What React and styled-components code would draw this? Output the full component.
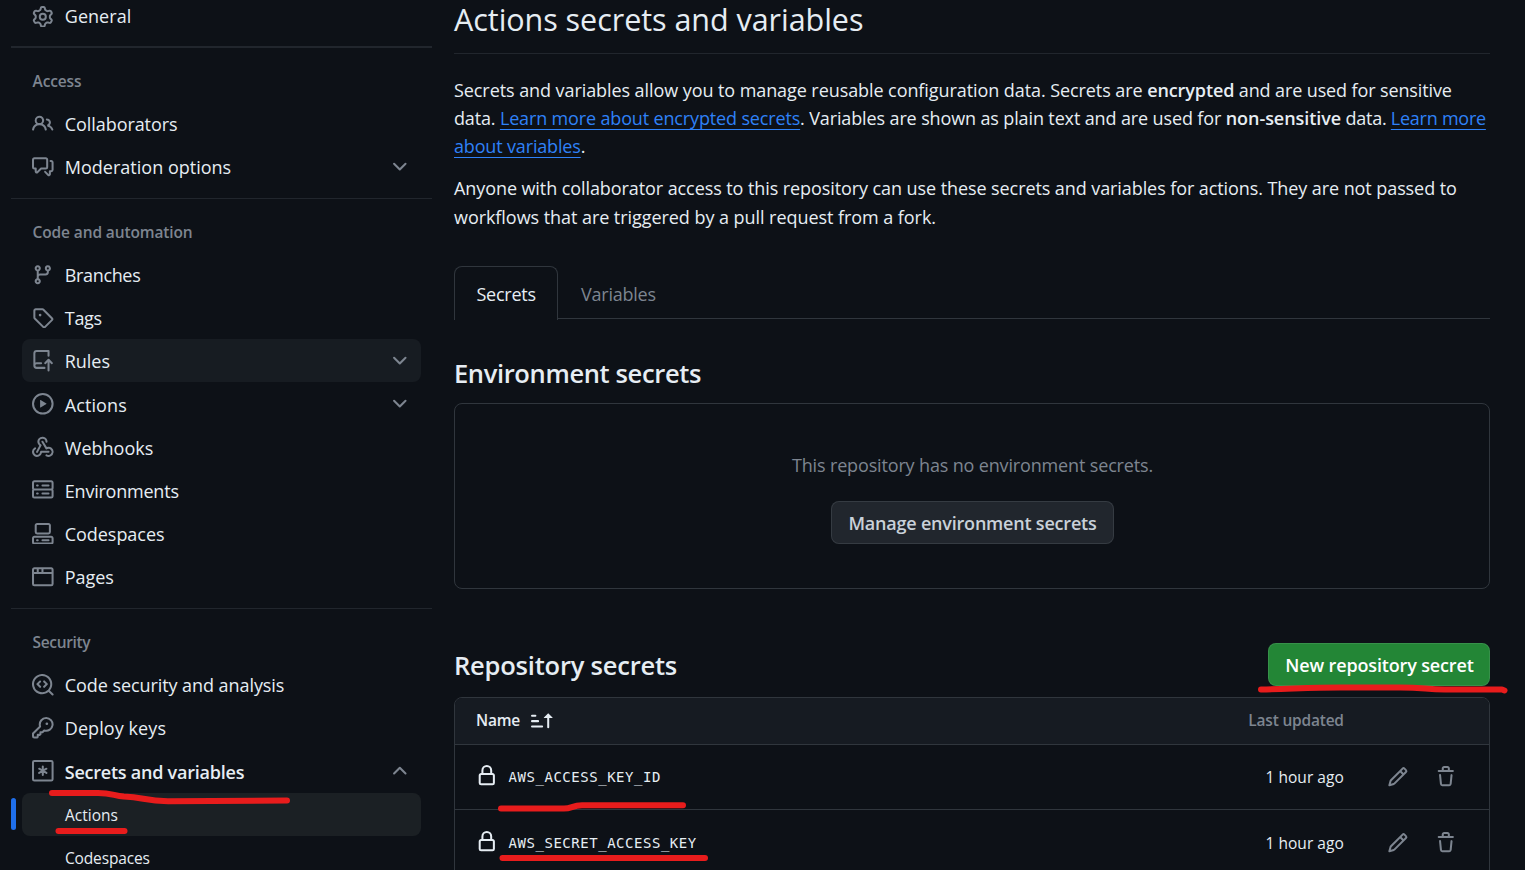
import React from "react";
import styled, { createGlobalStyle } from "styled-components";

const GlobalStyle = createGlobalStyle`
  * { box-sizing: border-box; }
  html, body { margin: 0; height: 100%; background: #0d1117; overflow: hidden; }
  body {
    color: #e6edf3;
    font-family: "Open Sans", "Noto Sans", sans-serif;
    font-size: 18px;
  }
  h1, h2, h3, p { margin: 0; }
`;

const Page = styled.div`
  position: relative;
  display: grid;
  grid-template-columns: 421px 1036px;
  column-gap: 22px;
  padding: 0 35px 0 11px;
  height: 870px;
  overflow: hidden;
`;

const Text = styled.span`
  letter-spacing: ${(p) => p.$ls || 0}px;
  white-space: nowrap;
`;

/* ---------- icons ---------- */

const Glyph = styled.svg`
  flex: none;
  display: block;
  width: 21.6px;
  height: 21.6px;
  fill: currentColor;
`;

const paths = {
  gear: "M8 0a8.2 8.2 0 0 1 .701.031C9.444.095 9.99.645 10.16 1.29l.288 1.107c.018.066.079.158.212.224.231.114.454.243.668.386.123.082.233.09.299.071l1.103-.303c.644-.176 1.392.021 1.82.63.27.385.506.792.704 1.218.315.675.111 1.422-.364 1.891l-.814.806c-.049.048-.098.147-.088.294.016.257.016.515 0 .772-.01.147.038.246.088.294l.814.806c.475.469.679 1.216.364 1.891a7.977 7.977 0 0 1-.704 1.217c-.428.61-1.176.807-1.82.63l-1.102-.302c-.067-.019-.177-.011-.3.071a5.909 5.909 0 0 1-.668.386c-.133.066-.194.158-.211.224l-.29 1.106c-.168.646-.715 1.196-1.458 1.26a8.006 8.006 0 0 1-1.402 0c-.743-.064-1.289-.614-1.458-1.26l-.289-1.106c-.018-.066-.079-.158-.212-.224a5.738 5.738 0 0 1-.668-.386c-.123-.082-.233-.09-.299-.071l-1.103.303c-.644.176-1.392-.021-1.82-.63a8.12 8.12 0 0 1-.704-1.218c-.315-.675-.111-1.422.363-1.891l.815-.806c.05-.048.098-.147.088-.294a6.214 6.214 0 0 1 0-.772c.01-.147-.038-.246-.088-.294l-.815-.806C.635 6.045.431 5.298.746 4.623a7.92 7.92 0 0 1 .704-1.217c.428-.61 1.176-.807 1.82-.63l1.102.302c.067.019.177.011.3-.071.214-.143.437-.272.668-.386.133-.066.194-.158.211-.224l.29-1.106C6.009.645 6.556.095 7.299.03 7.53.01 7.764 0 8 0Zm-.571 1.525c-.036.003-.108.036-.137.146l-.289 1.105c-.147.561-.549.967-.998 1.189-.173.086-.34.183-.5.29-.417.278-.97.423-1.529.27l-1.103-.303c-.109-.03-.175.016-.195.045-.22.312-.412.644-.573.99-.014.031-.021.11.059.19l.815.806c.411.406.562.957.53 1.456a4.709 4.709 0 0 0 0 .582c.032.499-.119 1.05-.53 1.456l-.815.806c-.081.08-.073.159-.059.19.162.346.353.677.573.989.02.03.085.076.195.046l1.102-.303c.56-.153 1.113-.008 1.53.27.161.107.328.204.501.29.447.222.85.629.997 1.189l.289 1.105c.029.109.101.143.137.146a6.6 6.6 0 0 0 1.142 0c.036-.003.108-.036.137-.146l.289-1.105c.147-.561.549-.967.998-1.189.173-.086.34-.183.5-.29.417-.278.97-.423 1.529-.27l1.103.303c.109.029.175-.016.195-.045.22-.313.411-.644.573-.99.014-.031.021-.11-.059-.19l-.815-.806c-.411-.406-.562-.957-.53-1.456a4.709 4.709 0 0 0 0-.582c-.032-.499.119-1.05.53-1.456l.815-.806c.081-.08.073-.159.059-.19a6.464 6.464 0 0 0-.573-.989c-.02-.03-.085-.076-.195-.046l-1.102.303c-.56.153-1.113.008-1.53-.27a4.44 4.44 0 0 0-.501-.29c-.447-.222-.85-.629-.997-1.189l-.289-1.105c-.029-.11-.101-.143-.137-.146a6.6 6.6 0 0 0-1.142 0ZM11 8a3 3 0 1 1-6 0 3 3 0 0 1 6 0ZM9.5 8a1.5 1.5 0 1 0-3.001.001A1.5 1.5 0 0 0 9.5 8Z",
  people: "M2 5.5a3.5 3.5 0 1 1 5.898 2.549 5.508 5.508 0 0 1 3.034 4.084.75.75 0 1 1-1.482.235 4 4 0 0 0-7.9 0 .75.75 0 0 1-1.482-.236A5.507 5.507 0 0 1 3.102 8.05 3.493 3.493 0 0 1 2 5.5ZM11 4a3.001 3.001 0 0 1 2.22 5.018 5.01 5.01 0 0 1 2.56 3.012.749.749 0 0 1-.885.954.752.752 0 0 1-.549-.514 3.507 3.507 0 0 0-2.522-2.372.75.75 0 0 1-.574-.73v-.352a.75.75 0 0 1 .416-.672A1.5 1.5 0 0 0 11 5.5.75.75 0 0 1 11 4Zm-5.5-.5a2 2 0 1 0-.001 3.999A2 2 0 0 0 5.5 3.5Z",
  discussion: "M1.75 1h8.5c.966 0 1.75.784 1.75 1.75v5.5A1.75 1.75 0 0 1 10.25 10H7.061l-2.574 2.573A1.458 1.458 0 0 1 2 11.543V10h-.25A1.75 1.75 0 0 1 0 8.25v-5.5C0 1.784.784 1 1.75 1ZM1.5 2.75v5.5c0 .138.112.25.25.25h1a.75.75 0 0 1 .75.75v2.19l2.72-2.72a.749.749 0 0 1 .53-.22h3.5a.25.25 0 0 0 .25-.25v-5.5a.25.25 0 0 0-.25-.25h-8.5a.25.25 0 0 0-.25.25Zm13 2a.25.25 0 0 0-.25-.25h-.5a.75.75 0 0 1 0-1.5h.5c.966 0 1.75.784 1.75 1.75v5.5A1.75 1.75 0 0 1 14.25 12H14v1.543a1.458 1.458 0 0 1-2.487 1.03L9.22 12.28a.749.749 0 0 1 .326-1.275.749.749 0 0 1 .734.215l2.22 2.22v-2.19a.75.75 0 0 1 .75-.75h1a.25.25 0 0 0 .25-.25Z",
  branch: "M9.5 3.25a2.25 2.25 0 1 1 3 2.122V6A2.5 2.5 0 0 1 10 8.5H6a1 1 0 0 0-1 1v1.128a2.251 2.251 0 1 1-1.5 0V5.372a2.25 2.25 0 1 1 1.5 0v1.836A2.493 2.493 0 0 1 6 7h4a1 1 0 0 0 1-1v-.628A2.25 2.25 0 0 1 9.5 3.25Zm-6 0a.75.75 0 1 0 1.5 0 .75.75 0 0 0-1.5 0Zm8.25-.75a.75.75 0 1 0 0 1.5.75.75 0 0 0 0-1.5ZM4.25 12a.75.75 0 1 0 0 1.5.75.75 0 0 0 0-1.5Z",
  tag: "M1 7.775V2.75C1 1.784 1.784 1 2.75 1h5.025c.464 0 .91.184 1.238.513l6.25 6.25a1.75 1.75 0 0 1 0 2.474l-5.026 5.026a1.75 1.75 0 0 1-2.474 0l-6.25-6.25A1.752 1.752 0 0 1 1 7.775Zm1.5 0c0 .066.026.13.073.177l6.25 6.25a.25.25 0 0 0 .354 0l5.025-5.025a.25.25 0 0 0 0-.354l-6.25-6.25a.25.25 0 0 0-.177-.073H2.75a.25.25 0 0 0-.25.25ZM6 5a1 1 0 1 1 0 2 1 1 0 0 1 0-2Z",
  repoPush: "M1 2.5A2.5 2.5 0 0 1 3.5 0h8.75a.75.75 0 0 1 .75.75v3.5a.75.75 0 0 1-1.5 0V1.5h-8a1 1 0 0 0-1 1v6.708A2.493 2.493 0 0 1 3.5 9h3.25a.75.75 0 0 1 0 1.5H3.5a1 1 0 0 0 0 2h5.75a.75.75 0 0 1 0 1.5H3.5A2.5 2.5 0 0 1 1 11.5Zm13.23 7.79h-.001l-1.224-1.224v6.184a.75.75 0 0 1-1.5 0V9.066L10.28 10.29a.75.75 0 0 1-1.06-1.061l2.505-2.504a.75.75 0 0 1 1.06 0L15.29 9.23a.751.751 0 0 1-.018 1.042.751.751 0 0 1-1.042.018Z",
  play: "M8 0a8 8 0 1 1 0 16A8 8 0 0 1 8 0ZM1.5 8a6.5 6.5 0 1 0 13 0 6.5 6.5 0 0 0-13 0Zm4.879-2.773 4.264 2.559a.25.25 0 0 1 0 .428l-4.264 2.559A.25.25 0 0 1 6 10.559V5.442a.25.25 0 0 1 .379-.215Z",
  webhook: "M5.5 4.25a2.25 2.25 0 0 1 4.5 0 .75.75 0 0 0 1.5 0 3.75 3.75 0 1 0-6.14 2.889l-2.272 4.258a.75.75 0 0 0 1.324.706L7 7.25a.75.75 0 0 0-.309-1.015A2.25 2.25 0 0 1 5.5 4.25Z M7.364 3.607a.75.75 0 0 1 1.03.257l2.608 4.349a3.75 3.75 0 1 1-.628 6.785.75.75 0 0 1 .752-1.299 2.25 2.25 0 1 0-.033-3.88.75.75 0 0 1-1.03-.256L7.107 4.636a.75.75 0 0 1 .257-1.03Z M2.9 8.776A.75.75 0 0 1 2.625 9.8 2.25 2.25 0 1 0 6 11.75a.75.75 0 0 1 .75-.751h5.5a.75.75 0 0 1 0 1.5H7.425a3.751 3.751 0 1 1-5.55-3.998.75.75 0 0 1 1.024.274Z",
  server: "M1.75 1h12.5c.966 0 1.75.784 1.75 1.75v4c0 .372-.116.717-.314 1 .198.283.314.628.314 1v4a1.75 1.75 0 0 1-1.75 1.75H1.75A1.75 1.75 0 0 1 0 12.75v-4c0-.358.109-.707.314-1a1.739 1.739 0 0 1-.314-1v-4C0 1.784.784 1 1.75 1ZM1.5 2.75v4c0 .138.112.25.25.25h12.5a.25.25 0 0 0 .25-.25v-4a.25.25 0 0 0-.25-.25H1.75a.25.25 0 0 0-.25.25Zm.25 5.75a.25.25 0 0 0-.25.25v4c0 .138.112.25.25.25h12.5a.25.25 0 0 0 .25-.25v-4a.25.25 0 0 0-.25-.25ZM7 4.75A.75.75 0 0 1 7.75 4h4.5a.75.75 0 0 1 0 1.5h-4.5A.75.75 0 0 1 7 4.75ZM7.75 10h4.5a.75.75 0 0 1 0 1.5h-4.5a.75.75 0 0 1 0-1.5ZM3 4.75A.75.75 0 0 1 3.75 4h.5a.75.75 0 0 1 0 1.5h-.5A.75.75 0 0 1 3 4.75ZM3.75 10h.5a.75.75 0 0 1 0 1.5h-.5a.75.75 0 0 1 0-1.5Z",
  codespaces: "M0 11.25c0-.966.784-1.75 1.75-1.75h12.5c.966 0 1.75.784 1.75 1.75v3A1.75 1.75 0 0 1 14.25 16H1.75A1.75 1.75 0 0 1 0 14.25Zm2-9.5C2 .784 2.784 0 3.75 0h8.5C13.216 0 14 .784 14 1.75v5a1.75 1.75 0 0 1-1.75 1.75h-8.5A1.75 1.75 0 0 1 2 6.75Zm1.75-.25a.25.25 0 0 0-.25.25v5c0 .138.112.25.25.25h8.5a.25.25 0 0 0 .25-.25v-5a.25.25 0 0 0-.25-.25Zm-2 9.5a.25.25 0 0 0-.25.25v3c0 .138.112.25.25.25h12.5a.25.25 0 0 0 .25-.25v-3a.25.25 0 0 0-.25-.25Z M7 12.75a.75.75 0 0 1 .75-.75h4.5a.75.75 0 0 1 0 1.5h-4.5a.75.75 0 0 1-.75-.75Zm-4 0a.75.75 0 0 1 .75-.75h.5a.75.75 0 0 1 0 1.5h-.5a.75.75 0 0 1-.75-.75Z",
  browser: "M0 2.75C0 1.784.784 1 1.75 1h12.5c.966 0 1.75.784 1.75 1.75v10.5A1.75 1.75 0 0 1 14.25 15H1.75A1.75 1.75 0 0 1 0 13.25ZM14.5 6h-13v7.25c0 .138.112.25.25.25h12.5a.25.25 0 0 0 .25-.25Zm-6-3.5v2h6V2.75a.25.25 0 0 0-.25-.25ZM5 2.5v2h2v-2Zm-3.25 0a.25.25 0 0 0-.25.25V4.5h2v-2Z",
  codescan: "M8.47 4.97a.75.75 0 0 0 0 1.06L9.94 7.5 8.47 8.97a.75.75 0 1 0 1.06 1.06l2-2a.75.75 0 0 0 0-1.06l-2-2a.75.75 0 0 0-1.06 0ZM6.53 6.03a.75.75 0 0 0-1.06-1.06l-2 2a.75.75 0 0 0 0 1.06l2 2a.75.75 0 1 0 1.06-1.06L5.06 7.5l1.47-1.47Z M12.246 13.307a7.501 7.501 0 1 1 1.06-1.06l2.474 2.473a.749.749 0 0 1-.326 1.275.749.749 0 0 1-.734-.215ZM1.5 7.5a6.002 6.002 0 0 0 3.608 5.504 6.002 6.002 0 0 0 6.486-1.117.748.748 0 0 1 .292-.293A6 6 0 1 0 1.5 7.5Z",
  key: "M10.5 0a5.499 5.499 0 1 1-1.288 10.848l-.932.932a.749.749 0 0 1-.53.22H7v.75a.749.749 0 0 1-.22.53l-.5.5a.749.749 0 0 1-.53.22H5v.75a.749.749 0 0 1-.22.53l-.5.5a.749.749 0 0 1-.53.22h-2A1.75 1.75 0 0 1 0 14.25v-2c0-.199.079-.389.22-.53l4.932-4.932A5.5 5.5 0 0 1 10.5 0Zm-4 5.5c-.001.431.069.86.205 1.269a.75.75 0 0 1-.181.768L1.5 12.56v1.69c0 .138.112.25.25.25h1.69l.06-.06v-1.19a.75.75 0 0 1 .75-.75h1.19l.06-.06v-1.19a.75.75 0 0 1 .75-.75h1.19l1.023-1.025a.75.75 0 0 1 .768-.18A4 4 0 1 0 6.5 5.5ZM11 6a1 1 0 1 1 0-2 1 1 0 0 1 0 2Z",
  chevronDown: "M12.78 5.22a.749.749 0 0 1 0 1.06l-4.25 4.25a.749.749 0 0 1-1.06 0L3.22 6.28a.749.749 0 1 1 1.06-1.06L8 8.939l3.72-3.719a.749.749 0 0 1 1.06 0Z",
  chevronUp: "M3.22 10.53a.749.749 0 0 1 0-1.06l4.25-4.25a.749.749 0 0 1 1.06 0l4.25 4.25a.749.749 0 1 1-1.06 1.06L8 6.811 4.28 10.53a.749.749 0 0 1-1.06 0Z",
  lock: "M4 4a4 4 0 0 1 8 0v2h.25c.966 0 1.75.784 1.75 1.75v5.5A1.75 1.75 0 0 1 12.25 15h-8.5A1.75 1.75 0 0 1 2 13.25v-5.5C2 6.784 2.784 6 3.75 6H4Zm8.25 3.5h-8.5a.25.25 0 0 0-.25.25v5.5c0 .138.112.25.25.25h8.5a.25.25 0 0 0 .25-.25v-5.5a.25.25 0 0 0-.25-.25ZM10.5 6V4a2.5 2.5 0 1 0-5 0v2Z",
  pencil: "M11.013 1.427a1.75 1.75 0 0 1 2.474 0l1.086 1.086a1.75 1.75 0 0 1 0 2.474l-8.61 8.61c-.21.21-.47.364-.756.445l-3.251.93a.75.75 0 0 1-.927-.928l.929-3.25c.081-.286.235-.547.445-.758l8.61-8.61Zm.176 4.823L9.75 4.81l-6.286 6.287a.253.253 0 0 0-.064.108l-.558 1.953 1.953-.558a.253.253 0 0 0 .108-.064Zm1.238-3.763a.25.25 0 0 0-.354 0L10.811 3.75l1.439 1.44 1.263-1.263a.25.25 0 0 0 0-.354Z",
  trash: "M11 1.75V3h2.25a.75.75 0 0 1 0 1.5H2.75a.75.75 0 0 1 0-1.5H5V1.75C5 .784 5.784 0 6.75 0h2.5C10.216 0 11 .784 11 1.75ZM4.496 6.675l.66 6.6a.25.25 0 0 0 .249.225h5.19a.25.25 0 0 0 .249-.225l.66-6.6a.75.75 0 0 1 1.492.149l-.66 6.6A1.748 1.748 0 0 1 10.595 15h-5.19a1.75 1.75 0 0 1-1.741-1.575l-.66-6.6a.75.75 0 1 1 1.492-.15ZM6.5 1.75V3h3V1.75a.25.25 0 0 0-.25-.25h-2.5a.25.25 0 0 0-.25.25Z",
  sortAsc: "m12.927 2.573 3 3A.25.25 0 0 1 15.75 6H13.5v6.75a.75.75 0 0 1-1.5 0V6H9.75a.25.25 0 0 1-.177-.427l3-3a.25.25 0 0 1 .354 0ZM0 12.25a.75.75 0 0 1 .75-.75h7.5a.75.75 0 0 1 0 1.5H.75a.75.75 0 0 1-.75-.75Zm0-4a.75.75 0 0 1 .75-.75h4.5a.75.75 0 0 1 0 1.5H.75A.75.75 0 0 1 0 8.25Zm0-4a.75.75 0 0 1 .75-.75h2.5a.75.75 0 0 1 0 1.5H.75A.75.75 0 0 1 0 4.25Z",
};

function Icon({ name }) {
  if (name === "asterisk") {
    return (
      <Glyph viewBox="0 0 16 16" aria-hidden="true">
        <g fill="none" stroke="currentColor" strokeWidth="1.5">
          <rect x=".75" y=".75" width="14.5" height="14.5" rx="1" />
          <path strokeLinecap="round" strokeWidth="1.5" d="M8 4.900v6.200M5.300 6.450l5.400 3.100M10.700 6.450l-5.400 3.100" />
        </g>
      </Glyph>
    );
  }
  return (
    <Glyph viewBox="0 0 16 16" aria-hidden="true">
      <path d={paths[name]} />
    </Glyph>
  );
}

/* ---------- sidebar ---------- */

const Sidebar = styled.nav`
  display: flex;
  flex-direction: column;
`;

const NavGroup = styled.section`
  --label-top: ${(p) => p.$labelTop || 0}px;
  display: flex;
  flex-direction: column;
  flex: none;
`;

const NavRow = styled.a`
  position: relative;
  flex: none;
  display: flex;
  align-items: center;
  gap: 11.2px;
  height: ${(p) => (p.$first ? 33 : 43.2)}px;
  margin: 0 11px;
  padding: ${(p) => (p.$sub ? "0 10px 0 43px" : "0 10px")};
  border-radius: 8px;
  background: ${(p) => p.$bg || "transparent"};
  font-size: ${(p) => (p.$sub ? 15.5 : 18)}px;
  font-weight: ${(p) => (p.$bold ? 600 : 400)};

  ${(p) =>
    p.$current &&
    `&::before {
      content: "";
      position: absolute;
      left: -11px;
      top: 5px;
      width: 5px;
      height: 32px;
      border-radius: 3px;
      background: #1f6feb;
    }`}
`;

const NavLabel = styled(Text)`
  padding-top: var(--label-top);
  padding-bottom: ${(p) => (p.$raised ? 2 : 0)}px;
`;

const NavIcon = styled.span`
  color: #7d8590;
`;

const Chevron = styled(NavIcon)`
  margin-left: auto;
`;

const Divider = styled.div`
  flex: none;
  height: ${(p) => p.$h || 1}px;
  margin-top: ${(p) => p.$gap}px;
  background: #21262d;
`;

const GroupTitle = styled.h3`
  flex: none;
  height: ${(p) => p.$h}px;
  padding: ${(p) => p.$top || 21.5}px 21.5px 0;
  line-height: 24px;
  font-size: 15.5px;
  font-weight: 600;
  color: #7d8590;
`;

function NavItem({ icon, label, ls, chevron, raised, ...rest }) {
  return (
    <NavRow {...rest}>
      {icon && (
        <NavIcon>
          <Icon name={icon} />
        </NavIcon>
      )}
      <NavLabel $ls={ls} $raised={raised}>{label}</NavLabel>
      {chevron && (
        <Chevron>
          <Icon name={chevron} />
        </Chevron>
      )}
    </NavRow>
  );
}

/* ---------- main column ---------- */

const Main = styled.main`
  display: flex;
  flex-direction: column;
`;

const PageTitle = styled.h1`
  height: 54px;
  border-bottom: 1px solid #21262d;
  line-height: 38px;
  font-size: 30.5px;
  font-weight: 400;
`;

const Intro = styled.div`
  display: flex;
  flex-direction: column;
  gap: 14px;
  height: 212px;
  padding-top: 22.4px;
`;

const Paragraph = styled.p`
  line-height: ${(p) => p.$lh}px;
`;

const Line = styled.span`
  display: block;
  white-space: nowrap;
`;

const Strong = styled(Text)`
  font-weight: 600;
`;

const Link = styled(Text)`
  color: #2f81f7;
  text-decoration: underline;
  text-decoration-thickness: 1px;
  text-underline-offset: 4px;
  text-decoration-skip-ink: none;
`;

const Tabs = styled.div`
  display: flex;
  height: 53px;
  border-bottom: 1px solid #30363d;
`;

const Tab = styled.div`
  height: 54px;
  line-height: 55px;
  padding: 0 ${(p) => (p.$selected ? 21.5 : 22)}px;
  border: 1px solid ${(p) => (p.$selected ? "#30363d" : "transparent")};
  border-bottom: 0;
  border-radius: 8px 8px 0 0;
  background: ${(p) => (p.$selected ? "#0d1117" : "transparent")};
  color: ${(p) => (p.$selected ? "#e6edf3" : "#7d8590")};
  width: ${(p) => (p.$selected ? "104px" : "auto")};
`;

const SectionTitle = styled.h2`
  font-size: 25.5px;
  font-weight: 600;
  line-height: 38px;
  padding-top: ${(p) => p.$top || 0}px;
`;

const Blank = styled.section`
  display: flex;
  flex-direction: column;
  align-items: center;
  height: 186px;
  margin-top: 11px;
  padding-top: 47px;
  border: 1px solid #30363d;
  border-radius: 8px;
`;

const BlankNote = styled.p`
  height: 50px;
  padding-left: 1px;
  line-height: 28px;
  color: #7d8590;
`;

const Button = styled.button`
  height: 43px;
  width: ${(p) => p.$w}px;
  padding: 0 0 0 1px;
  border: 1px solid rgba(240, 246, 252, 0.1);
  border-radius: 8px;
  background: ${(p) => (p.$primary ? "#238636" : "#21262d")};
  color: ${(p) => (p.$primary ? "#ffffff" : "#c9d1d9")};
  font: 600 18px/40px "Open Sans", "Noto Sans", sans-serif;
`;

const SectionBar = styled.div`
  display: flex;
  justify-content: space-between;
  height: 54px;
  margin-top: 54px;
`;

const Table = styled.div`
  border: 1px solid #30363d;
  border-radius: 8px 8px 0 0;
  height: 240px;
  overflow: hidden;
`;

const Row = styled.div`
  display: grid;
  grid-template-columns: 1fr auto 65px 48px;
  align-items: center;
  height: ${(p) => (p.$head ? 47 : p.$h || 65)}px;
  padding: 0 32.2px 0 21px;
  border-bottom: 1px solid #30363d;
  background: ${(p) => (p.$head ? "#161b22" : "transparent")};
  font-size: 15.5px;
  font-weight: ${(p) => (p.$head ? 600 : 400)};
  line-height: 24px;
`;

const HeadLabel = styled(Text)`
  padding-bottom: 2px;
  color: ${(p) => (p.$muted ? "#7d8590" : "#e6edf3")};
`;

const NameCell = styled.div`
  display: flex;
  align-items: center;
  gap: ${(p) => p.$gap}px;
`;

const LockIcon = styled.span`
  margin-bottom: 2px;
`;

const SecretName = styled.code`
  font-family: "DejaVu Sans Mono", monospace;
  font-size: 14px;
  letter-spacing: 0.53px;
`;

const Action = styled.span`
  display: flex;
  justify-content: flex-end;
  color: #7d8590;
`;

/* hand-drawn red underlines over the page */
const Marks = styled.svg`
  position: absolute;
  left: 0;
  top: 0;
  width: 1525px;
  height: 870px;
  pointer-events: none;
  fill: none;
  stroke: #e81c1c;
  stroke-width: 6;
  stroke-linecap: round;
  stroke-linejoin: round;
`;

const secrets = [
  { name: "AWS_ACCESS_KEY_ID", h: 65 },
  { name: "AWS_SECRET_ACCESS_KEY", h: 66 },
];

export default function App() {
  return (
    <>
      <GlobalStyle />
      <Page>
        <Sidebar>
          <NavItem $first raised icon="gear" label="General" ls={0.03} />

          <NavGroup>
            <Divider $h={2} $gap={13} />
            <GroupTitle $h={54.4} $top={20.8}><Text $ls={-0.12}>Access</Text></GroupTitle>
            <NavItem icon="people" label="Collaborators" ls={-0.07} />
            <NavItem icon="discussion" label="Moderation options" ls={0.01} chevron="chevronDown" />
          </NavGroup>

          <NavGroup $labelTop={1.4}>
            <Divider $gap={9.2} />
            <GroupTitle $h={53.8}><Text $ls={-0.12}>Code and automation</Text></GroupTitle>
            <NavItem icon="branch" label="Branches" ls={-0.35} />
            <NavItem icon="tag" label="Tags" ls={-0.3} />
            <NavItem icon="repoPush" label="Rules" ls={-0.05} chevron="chevronDown" $bg="#171c22" />
            <NavItem icon="play" label="Actions" ls={0.09} chevron="chevronDown" />
            <NavItem icon="webhook" label="Webhooks" ls={0.015} />
            <NavItem icon="server" label="Environments" ls={-0.22} />
            <NavItem icon="codespaces" label="Codespaces" ls={-0.05} />
            <NavItem icon="browser" label="Pages" ls={-0.05} />
          </NavGroup>

          <NavGroup $labelTop={0.6}>
            <Divider $gap={9.6} />
            <GroupTitle $h={54.4}><Text $ls={-0.33}>Security</Text></GroupTitle>
            <NavItem icon="codescan" label="Code security and analysis" ls={-0.07} />
            <NavItem icon="key" label="Deploy keys" ls={0.08} />
            <NavItem icon="asterisk" label="Secrets and variables" ls={-0.235} chevron="chevronUp" $bold />
            <NavItem $sub $current label="Actions" ls={0} $bg="#1b2024" />
            <NavItem $sub label="Codespaces" ls={-0.154} />
          </NavGroup>
        </Sidebar>

        <Main>
          <PageTitle><Text $ls={-0.045}>Actions secrets and variables</Text></PageTitle>

          <Intro>
            <Paragraph $lh={28}>
              <Line>
                <Text $ls={-0.076}>Secrets and variables allow you to manage reusable configuration data. Secrets are </Text>
                <Strong $ls={-0.105}>encrypted</Strong>
                <Text $ls={-0.12}> and are used for sensitive</Text>
              </Line>
              <Line>
                <Text $ls={-0.16}>data. </Text>
                <Link $ls={-0.15}>Learn more about encrypted secrets</Link>
                <Text $ls={-0.13}>. Variables are shown as plain text and are used for </Text>
                <Strong $ls={-0.063}>non-sensitive</Strong>
                <Text $ls={-0.25}> data. </Text>
                <Link $ls={-0.25}>Learn more</Link>
              </Line>
              <Line>
                <Link $ls={-0.16}>about variables</Link>.
              </Line>
            </Paragraph>
            <Paragraph $lh={28.2}>
              <Line><Text $ls={-0.083}>Anyone with collaborator access to this repository can use these secrets and variables for actions. They are not passed to</Text></Line>
              <Line><Text $ls={-0.055}>workflows that are triggered by a pull request from a fork.</Text></Line>
            </Paragraph>
          </Intro>

          <Tabs>
            <Tab $selected><Text $ls={-0.247}>Secrets</Text></Tab>
            <Tab><Text $ls={-0.225}>Variables</Text></Tab>
          </Tabs>

          <SectionTitle $top={35}><Text $ls={-0.36}>Environment secrets</Text></SectionTitle>
          <Blank>
            <BlankNote><Text $ls={-0.152}>This repository has no environment secrets.</Text></BlankNote>
            <Button $w={283}><Text $ls={-0.206}>Manage environment secrets</Text></Button>
          </Blank>

          <SectionBar>
            <SectionTitle $top={3}><Text $ls={-0.21}>Repository secrets</Text></SectionTitle>
            <Button $primary $w={222}><Text $ls={-0.15}>New repository secret</Text></Button>
          </SectionBar>
          <Table>
            <Row $head>
              <NameCell $gap={11}>
                <HeadLabel $ls={-0.2}>Name</HeadLabel>
                <Icon name="sortAsc" />
              </NameCell>
              <HeadLabel $muted $ls={-0.21}>Last updated</HeadLabel>
            </Row>
            {secrets.map((s) => (
              <Row key={s.name} $h={s.h}>
                <NameCell $gap={11}>
                  <LockIcon><Icon name="lock" /></LockIcon>
                  <SecretName>{s.name}</SecretName>
                </NameCell>
                <Text $ls={0.043}>1 hour ago</Text>
                <Action><Icon name="pencil" /></Action>
                <Action><Icon name="trash" /></Action>
              </Row>
            ))}
          </Table>
        </Main>

        <Marks viewBox="0 0 1525 870" aria-hidden="true">
          <path d="M52 793H98C112 793 114 796 124 796.6 144 797 144 801.2 168 801.2L287 800.6" />
          <path d="M58.500 831H124.500" />
          <path d="M1261 689.500C1290 689 1310 687.500 1340 687.500H1400C1425 687.500 1425 689.500 1445 689.500H1502L1504.500 690.500" />
          <path d="M501 808.600H564C572 808.600 572 805.400 582 805.300H683" />
          <path d="M502.500 858H705" />
        </Marks>
      </Page>
    </>
  );
}
